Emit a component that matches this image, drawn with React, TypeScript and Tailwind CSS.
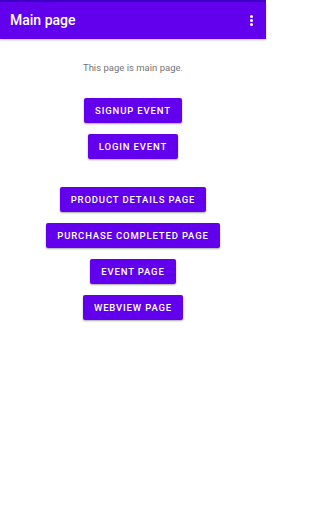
const buttonClass =
  "h-[25px] rounded-[2px] bg-[#6200EE] px-[11px] text-[9.5px] font-medium uppercase tracking-[0.85px] text-white shadow-[0_1px_2px_rgba(0,0,0,0.35)]"

function NavButton({ label }: { label: string }) {
  return <button className={buttonClass}>{label}</button>
}

export default function App() {
  return (
    <div
      className="flex min-h-[512px] w-[266px] flex-col bg-white"
      style={{ fontFamily: "Roboto, 'Liberation Sans', sans-serif" }}
    >
      <div className="h-[2px] bg-[#3D00C2]" />
      <header className="flex h-[37px] items-center justify-between bg-[#6200EE] pl-[10px] pr-[13px] shadow-[0_1px_2px_rgba(0,0,0,0.25)]">
        <h1 className="text-[14px] font-medium text-white">Main page</h1>
        <div className="flex flex-col items-center gap-[1.3px]">
          <span className="size-[3px] rounded-full bg-white" />
          <span className="size-[3px] rounded-full bg-white" />
          <span className="size-[3px] rounded-full bg-white" />
        </div>
      </header>
      <main className="flex flex-col items-center">
        <p className="mt-[22px] text-[9.5px] text-[#757575]">
          This page is main page.
        </p>
        <div className="mt-[23px] flex flex-col items-center gap-[11px]">
          <NavButton label="Signup event" />
          <NavButton label="Login event" />
        </div>
        <div className="mt-[28px] flex flex-col items-center gap-[11px]">
          <NavButton label="Product details page" />
          <NavButton label="Purchase completed page" />
          <NavButton label="Event page" />
          <NavButton label="Webview page" />
        </div>
      </main>
    </div>
  )
}
